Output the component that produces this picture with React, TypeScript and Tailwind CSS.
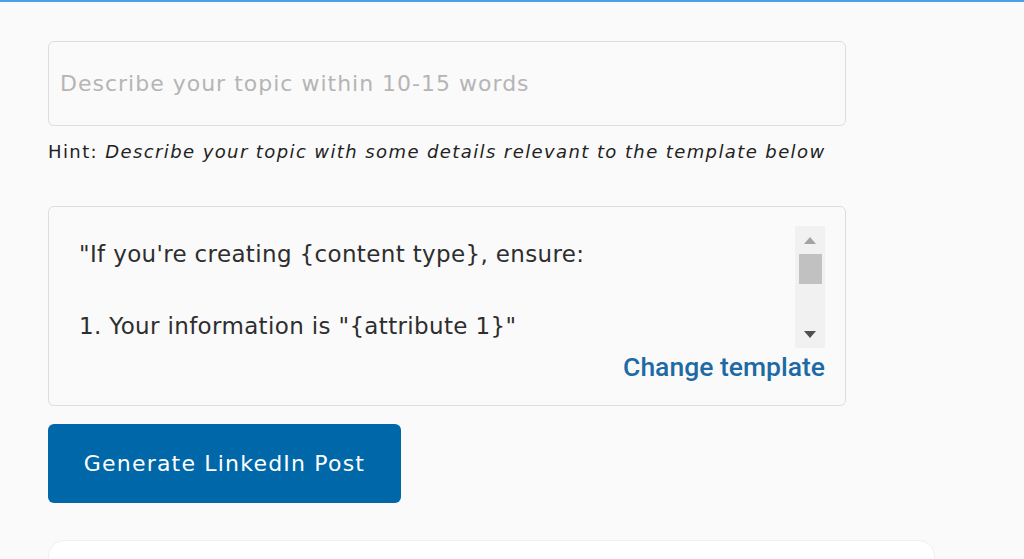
import React from 'react';

const font = { fontFamily: '"DejaVu Sans", "Open Sans", sans-serif' };

function FakeScrollbar() {
  return (
    <div className="absolute right-0 top-0 h-full w-[30px] bg-[#f1f1f1] flex flex-col items-center">
      <div className="h-[28px] flex items-center justify-center">
        <svg width="12" height="7" viewBox="0 0 12 7"><path d="M6 0 L12 7 L0 7 Z" fill="#a3a3a3" /></svg>
      </div>
      <div className="w-[23px] h-[30px] bg-[#c1c1c1]" />
      <div className="flex-1" />
      <div className="h-[28px] flex items-center justify-center">
        <svg width="12" height="7" viewBox="0 0 12 7"><path d="M0 0 L12 0 L6 7 Z" fill="#505050" /></svg>
      </div>
    </div>
  );
}

export default function App() {
  return (
    <div className="min-h-[559px] h-[559px] overflow-hidden bg-[#fafafa] border-t-2 border-[#4ca0e6]" style={font}>
      <div className="pl-[48px] pt-[39px] w-[846px]">
        {/* Topic input */}
        <div className="h-[85px] rounded-md border border-[#dedede] bg-[#fafafa] flex items-center px-[11px]">
          <span className="text-[22px] text-[#b5b5b5] tracking-[1px]">Describe your topic within 10-15 words</span>
        </div>
        <p className="mt-[13px] text-[18px] text-[#222] leading-[26px] tracking-[1.4px]">
          Hint: <em>Describe your topic with some details relevant to the template below</em>
        </p>

        {/* Template box */}
        <div className="mt-[41px] h-[200px] rounded-md border border-[#dedede] bg-[#fafafa] px-[20px] pt-[19px] flex flex-col">
          <div className="relative h-[122px]">
            <div className="pl-[10px] pt-[10px] text-[23px] leading-[36px] text-[#2e2e2e] tracking-[0.35px]">
              <div>"If you're creating {'{content type}'}, ensure:</div>
              <div>&nbsp;</div>
              <div>1. Your information is "{'{attribute 1}'}"</div>
            </div>
            <FakeScrollbar />
          </div>
          <div className="flex justify-end mt-[3px]">
            <span
              className="text-[26.5px] font-medium text-[#1d6aa5] leading-[32px]"
              style={{ fontFamily: 'Roboto, "Liberation Sans", sans-serif' }}
            >
              Change template
            </span>
          </div>
        </div>

        {/* Generate button */}
        <button className="mt-[18px] w-[353px] h-[79px] rounded-md bg-[#0067a9] text-white text-[22px] tracking-[1.2px] flex items-center justify-center">
          Generate LinkedIn Post
        </button>
      </div>

      {/* Output card (cut off) */}
      <div className="ml-[48px] mt-[37px] w-[887px] h-[100px] rounded-[16px] bg-white border border-[#f0f0f0]" />
    </div>
  );
}
